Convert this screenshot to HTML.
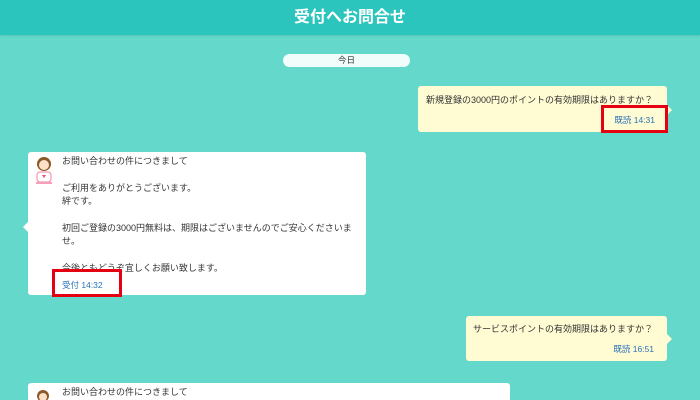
<!DOCTYPE html>
<html><head><meta charset="utf-8"><style>
*{margin:0;padding:0;box-sizing:border-box}
html,body{width:700px;height:400px;overflow:hidden}
body{background:#64d9cb;font-family:"Liberation Sans","Noto Sans CJK JP",sans-serif;position:relative;color:#333}
.hd{position:absolute;left:0;top:0;width:700px;height:35px;background:#2cc5bd;color:#fff;font-size:16px;font-weight:bold;text-align:center;line-height:35px;box-shadow:0 1px 2px rgba(0,0,0,.1)}
.pill{position:absolute;left:283px;top:54px;width:127px;height:13px;background:#f0fdfb;border-radius:7px;font-size:8.5px;text-align:center;line-height:13px}
.b{position:absolute;border-radius:3px;font-size:9px;line-height:13.4px;overflow:hidden}
.y{background:#fffbd3}
.w{background:#fff}
.t{color:#2a72b8;font-size:8.5px}
.red{position:absolute;border:3px solid #e50012}
.tri{position:absolute;width:0;height:0;border-top:5px solid transparent;border-bottom:5px solid transparent}
</style></head><body>
<div class="hd">受付へお問合せ</div>
<div class="pill">今日</div>

<div class="b y" style="left:418px;top:86px;width:249px;height:46px;padding:8px 8px">新規登録の3000円のポイントの有効期限はありますか？<div class="t" style="position:absolute;right:12px;top:28px">既読 14:31</div></div>
<div class="tri" style="left:667px;top:105px;border-left:5px solid #fffbd3"></div>
<div class="red" style="left:601px;top:105px;width:67px;height:28px"></div>

<div class="b w" style="left:28px;top:152px;width:338px;height:143px;padding:3px 0 0 34px">お問い合わせの件につきまして<br><br>ご利用をありがとうございます。<br>絆です。<br><br>初回ご登録の3000円無料は、期限はございませんのでご安心くださいま<br>せ。<br><br>今後ともどうぞ宜しくお願い致します。<div class="t" style="position:absolute;left:34px;top:127px">受付 14:32</div></div>
<div class="tri" style="left:23px;top:222px;border-right:5px solid #fff"></div>
<svg style="position:absolute;left:34px;top:155px" width="20" height="32" viewBox="0 0 20 32"><circle cx="10" cy="9" r="7" fill="#8b5a2b"/><circle cx="10" cy="10" r="5" fill="#fde0c8"/><rect x="3" y="17" width="14" height="10" rx="3" fill="#fff" stroke="#f080a0"/><path d="M8 20h4l-2 3z" fill="#e84c7c"/><rect x="2" y="27" width="16" height="2" fill="#f5a0b8"/></svg>
<div class="red" style="left:52px;top:269px;width:70px;height:28px"></div>

<div class="b y" style="left:466px;top:316px;width:201px;height:45px;padding:7px 7px">サービスポイントの有効期限はありますか？<div class="t" style="position:absolute;right:13px;top:27px">既読 16:51</div></div>
<div class="tri" style="left:667px;top:334px;border-left:5px solid #fffbd3"></div>

<div class="b w" style="left:28px;top:383px;width:482px;height:17px;padding:3px 0 0 34px;border-radius:3px 3px 0 0">お問い合わせの件につきまして</div>
<svg style="position:absolute;left:36px;top:389px" width="14" height="11" viewBox="0 0 14 11"><circle cx="7" cy="7" r="6" fill="#8b5a2b"/><circle cx="7" cy="8" r="4" fill="#fde0c8"/></svg>
</body></html>
